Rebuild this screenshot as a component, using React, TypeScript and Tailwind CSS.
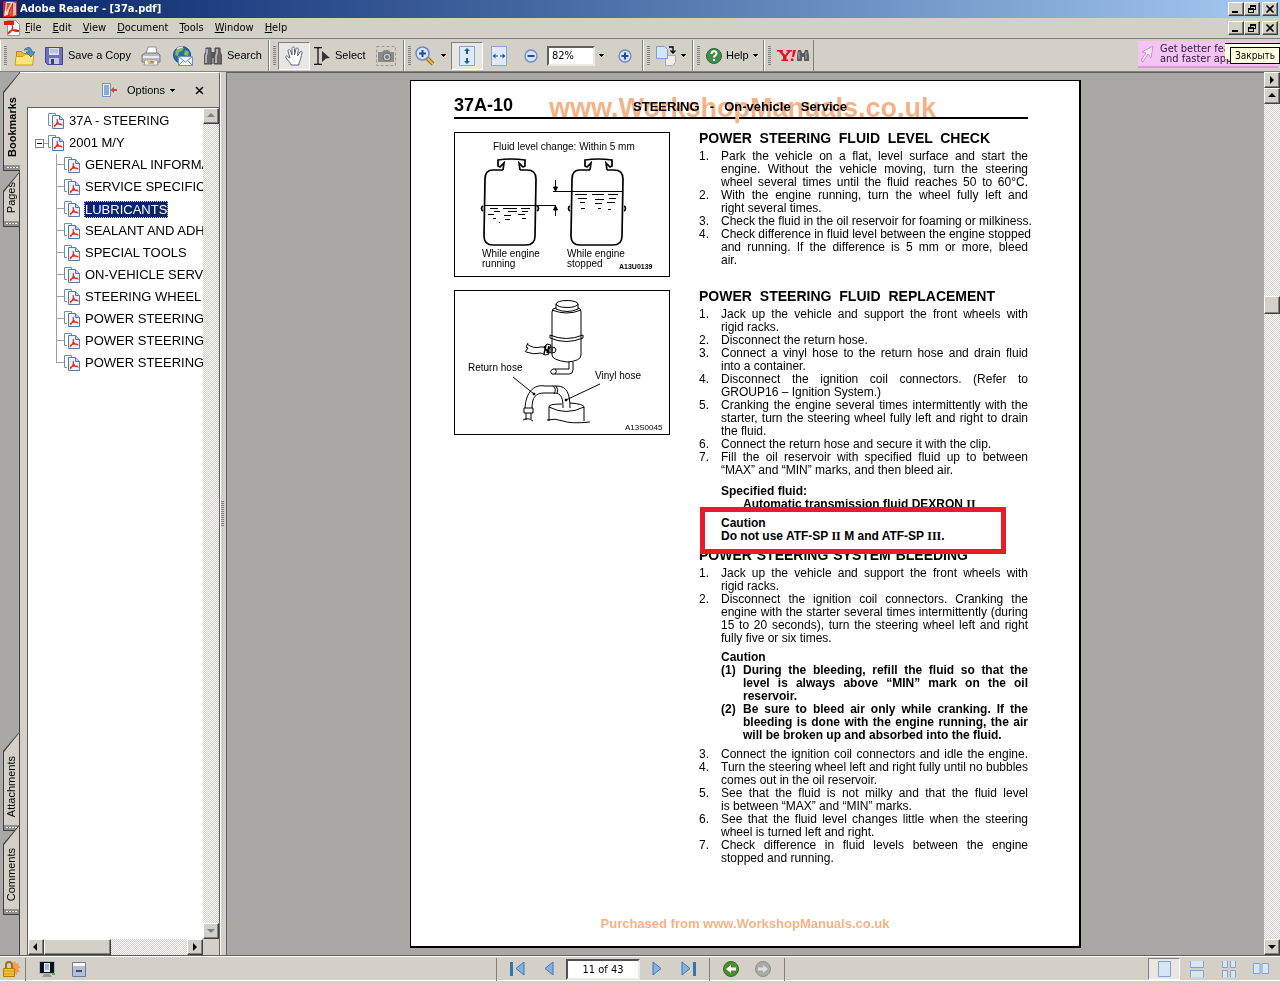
import type { ReactNode } from 'react'

type Step = { n: string; lines: string[]; full?: boolean }

const TRACK =
  'bg-[repeating-conic-gradient(#ffffff_0_25%,#d4d0c8_0_50%)] bg-[length:2px_2px]'
const RAISED =
  'border border-t-white border-l-white border-r-[#404040] border-b-[#404040] bg-[#d4d0c8] shadow-[inset_-1px_-1px_0_#808080]'

const bookmarks = [
  'GENERAL INFORMATION',
  'SERVICE SPECIFICATIONS',
  'LUBRICANTS',
  'SEALANT AND ADHESIVE',
  'SPECIAL TOOLS',
  'ON-VEHICLE SERVICE',
  'STEERING WHEEL AND SHAFT',
  'POWER STEERING GEAR BOX',
  'POWER STEERING OIL PUMP',
  'POWER STEERING HOSES',
]

const levelCheck: Step[] = [
  {
    n: '1.',
    full: true,
    lines: [
      'Park the vehicle on a flat, level surface and start the',
      'engine. Without the vehicle moving, turn the steering',
      'wheel several times until the fluid reaches 50 to 60°C.',
    ],
  },
  { n: '2.', lines: ['With the engine running, turn the wheel fully left and', 'right several times.'] },
  { n: '3.', full: true, lines: ['Check the fluid in the oil reservoir for foaming or milkiness.'] },
  {
    n: '4.',
    lines: [
      'Check difference in fluid level between the engine stopped',
      'and running. If the difference is 5 mm or more, bleed',
      'air.',
    ],
  },
]

const replacement: Step[] = [
  { n: '1.', lines: ['Jack up the vehicle and support the front wheels with', 'rigid racks.'] },
  { n: '2.', lines: ['Disconnect the return hose.'] },
  { n: '3.', lines: ['Connect a vinyl hose to the return hose and drain fluid', 'into a container.'] },
  { n: '4.', lines: ['Disconnect the ignition coil connectors. (Refer to', 'GROUP16 – Ignition System.)'] },
  {
    n: '5.',
    lines: [
      'Cranking the engine several times intermittently with the',
      'starter, turn the steering wheel fully left and right to drain',
      'the fluid.',
    ],
  },
  { n: '6.', lines: ['Connect the return hose and secure it with the clip.'] },
  {
    n: '7.',
    lines: ['Fill the oil reservoir with specified fluid up to between', '“MAX” and “MIN” marks, and then bleed air.'],
  },
]

const bleeding: Step[] = [
  { n: '1.', lines: ['Jack up the vehicle and support the front wheels with', 'rigid racks.'] },
  {
    n: '2.',
    lines: [
      'Disconnect the ignition coil connectors. Cranking the',
      'engine with the starter several times intermittently (during',
      '15 to 20 seconds), turn the steering wheel left and right',
      'fully five or six times.',
    ],
  },
]

const bleedingCautions: Step[] = [
  {
    n: '(1)',
    lines: ['During the bleeding, refill the fluid so that the', 'level is always above “MIN” mark on the oil', 'reservoir.'],
  },
  {
    n: '(2)',
    lines: [
      'Be sure to bleed air only while cranking. If the',
      'bleeding is done with the engine running, the air',
      'will be broken up and absorbed into the fluid.',
    ],
  },
]

const bleedingEnd: Step[] = [
  { n: '3.', full: true, lines: ['Connect the ignition coil connectors and idle the engine.'] },
  { n: '4.', lines: ['Turn the steering wheel left and right fully until no bubbles', 'comes out in the oil reservoir.'] },
  { n: '5.', lines: ['See that the fluid is not milky and that the fluid level', 'is between “MAX” and “MIN” marks.'] },
  { n: '6.', lines: ['See that the fluid level changes little when the steering', 'wheel is turned left and right.'] },
  { n: '7.', lines: ['Check difference in fluid levels between the engine', 'stopped and running.'] },
]

function Steps({ items }: { items: Step[] }) {
  return (
    <ol>
      {items.map((step) => (
        <li key={step.n} className="grid grid-cols-[22px_minmax(0,1fr)]">
          <span>{step.n}</span>
          <p>
            {step.lines.map((line, i) => (
              <span
                key={line}
                className={
                  i < step.lines.length - 1 || step.full
                    ? 'block whitespace-nowrap [text-align-last:justify]'
                    : 'block whitespace-nowrap'
                }
              >
                {line}{' '}
              </span>
            ))}
          </p>
        </li>
      ))}
    </ol>
  )
}

function Caret() {
  return (
    <svg width="5" height="3" viewBox="0 0 5 3" shapeRendering="crispEdges" aria-hidden="true">
      <path d="M0 0h5v1H0zM1 1h3v1H1zM2 2h1v1H2z" />
    </svg>
  )
}

function WindowButtons() {
  const base = `flex h-[14px] w-4 items-center justify-center ${RAISED}`
  return (
    <div className="flex pr-[2px]">
      <button aria-label="Minimize" className={base}>
        <svg width="12" height="10" shapeRendering="crispEdges">
          <path d="M2 7h6v2H2z" />
        </svg>
      </button>
      <button aria-label="Restore" className={base}>
        <svg width="12" height="10" shapeRendering="crispEdges">
          <path d="M4 1h6v2H4zM9 3h1v3H9zM4 3h1v1H4zM2 4h6v2H2zM2 6h1v3H2zM7 6h1v3H7zM2 8h6v1H2zM8 5h2v1H8z" />
        </svg>
      </button>
      <button aria-label="Close" className={`${base} ml-[2px]`}>
        <svg width="12" height="10">
          <path d="M2.500 1.500l7 7M9.500 1.500l-7 7" stroke="#000" strokeWidth="1.600" />
        </svg>
      </button>
    </div>
  )
}

function ArrowButton({ dir, muted }: { dir: 'up' | 'down' | 'left' | 'right'; muted?: boolean }) {
  const shapes = { up: 'M1 6l4-4 4 4z', down: 'M1 3h8l-4 4z', left: 'M6 1v8L2 5z', right: 'M3 1l4 4-4 4z' }
  return (
    <button aria-label={`Scroll ${dir}`} className={`flex size-4 shrink-0 items-center justify-center ${RAISED}`}>
      <svg width="10" height="10" fill={muted ? '#808080' : '#000'}>
        <path d={shapes[dir]} />
      </svg>
    </button>
  )
}

function ToolGroup({ className, children }: { className: string; children: ReactNode }) {
  return (
    <div className={`flex shrink-0 items-center border-r border-l border-r-[#808080] border-l-white pl-[3px] ${className}`}>
      <span className="mr-[2px] h-5 w-[3px] shrink-0 bg-[repeating-linear-gradient(#808080_0_1px,#d4d0c8_1px_2px)]" />
      {children}
    </div>
  )
}

function PdfPageIcon() {
  return (
    <svg width="16" height="16" viewBox="0 0 16 16" fill="none" className="shrink-0" aria-hidden="true">
      <path d="M3 12.500H.5V.5h7v2" fill="#fff" stroke="#6d8cba" />
      <path d="M4.500 2.500h7l4 4v9h-11z" fill="#edf3fb" stroke="#5577ad" />
      <path d="M11.500 2.500v4h4" fill="#b8cdea" stroke="#5577ad" />
      <path d="M9 6c1 2 0 5-3 8M9.500 9c1 2 2.500 3 5 3M6 13c2-2 5-2.500 8-1.500" stroke="#e03418" strokeWidth="1.200" />
    </svg>
  )
}

function AdobeIcon() {
  return (
    <svg width="14" height="16" viewBox="0 0 14 16" aria-hidden="true">
      <path d="M0 1l3-1h11v15l-4 1H0z" fill="#d8201c" />
      <path d="M3 1h7L6 9l-1 5-4 1z" fill="#fff" opacity=".85" />
      <path d="M4 2l4 0-5 9zM9 4l1 11H7l-1-4z" fill="#ee4b39" />
      <path d="M10 1l3 1v12l-3 1z" fill="#f4b6a8" />
    </svg>
  )
}

function MenuPdfIcon() {
  return (
    <svg width="16" height="16" viewBox="0 0 16 16" fill="none" aria-hidden="true">
      <path d="M3.500.5h8l4 4v11h-12z" fill="#fafafa" stroke="#999" />
      <path d="M0 1h10v4H0z" fill="#dd1c1c" />
      <path d="M8 5c2 3 0 6-4 9M8 8c1 3 3 4 7 3M4 13c2-3 7-4 11-2" stroke="#d82a20" strokeWidth="1.300" />
    </svg>
  )
}

function OpenIcon() {
  return (
    <svg width="22" height="20" viewBox="0 0 22 20" aria-hidden="true">
      <path d="M2.500 5.500h5l2 2h8v11h-15z" fill="#e9bb3f" stroke="#b88916" />
      <path d="M1 19l1-8.500h7l2-2h9L18.500 19z" fill="#ffe579" stroke="#c99c24" />
      <path d="M10 4c3-4 8-3 8 2h3l-4 5-5-5h3c0-2-2-3-5-2z" fill="#5c93c7" stroke="#2c629b" strokeWidth=".8" />
    </svg>
  )
}

function SaveIcon() {
  return (
    <svg width="18" height="18" viewBox="0 0 18 18" aria-hidden="true">
      <path d="M.5.5h17v17h-15l-2-2z" fill="#6f70b8" stroke="#44458b" />
      <path d="M4 1h10v7H4z" fill="#dcdff0" />
      <path d="M5 3h8M5 5h8" stroke="#999fc4" />
      <path d="M4 11h10v6H4z" fill="#c5c8dc" />
      <path d="M6 12h3v5H6z" fill="#3d3e77" />
    </svg>
  )
}

function PrintIcon() {
  return (
    <svg width="20" height="20" viewBox="0 0 20 20" aria-hidden="true">
      <path d="M5 8l2-7h8l1 7z" fill="#fff" stroke="#8f9299" />
      <path d="M1 9l3-2h13l2 2v7H1z" fill="#b9bbc0" stroke="#777a82" />
      <path d="M2 10h16v2H2z" fill="#e9eaec" />
      <path d="M4 14h12l1 5H3z" fill="#fff" stroke="#999" />
      <path d="M6 15h8l-1 3H7z" fill="#f0c23f" />
      <path d="M9 15l4 0-2 3z" fill="#6d8fce" />
    </svg>
  )
}

function MailIcon() {
  return (
    <svg width="20" height="20" viewBox="0 0 20 20" aria-hidden="true">
      <circle cx="9" cy="9" r="8.500" fill="#2c68ad" stroke="#1c4c86" />
      <path d="M3 4c3-3 6-3 8-2l-2 3-3 1-1 4-3-1zM12 4l4 2-1 4-4-1z" fill="#82bb5d" />
      <path d="M4 3c2-2 5-2 6-2" stroke="#d9ecff" strokeWidth="1.500" fill="none" />
      <path d="M5.500 10.500h14v9h-14z" fill="#f3f7fc" stroke="#6c93c2" />
      <path d="M6 11l6.500 5L19 11M6 19l4-4M19 19l-4-4" fill="none" stroke="#6c93c2" />
    </svg>
  )
}

function BinocularsIcon() {
  return (
    <svg width="18" height="18" viewBox="0 0 18 18" aria-hidden="true">
      <path d="M2 1h5v4l1 3v9H0V9l2-4zM11 1h5v4l2 4v8h-8V8l1-3z" fill="#686868" stroke="#484848" />
      <path d="M7 5h4v6H7z" fill="#555" />
      <path d="M3 2v4L2 9v7M13 2v4l-1 3v7" stroke="#c4c4c4" strokeWidth="1.500" fill="none" />
    </svg>
  )
}

function HandIcon() {
  return (
    <svg width="20" height="20" viewBox="0 0 20 20" aria-hidden="true">
      <path
        d="M7 19c0-2-3-4-5-7-1-2 1-3 2-1l2 1L4 5c0-2 2-2 2.500 0L8 9V2.500c0-2 2.500-2 2.500 0V9L12 3c.5-2 2.500-1 2.300.5L13.500 10l2.500-4c1-1.500 2.500-.5 2 1-1 3-1.500 8-3 9.500L15 19z"
        fill="#fff"
        stroke="#5a6275"
      />
    </svg>
  )
}

function SelectIcon() {
  return (
    <svg width="18" height="18" viewBox="0 0 18 18" aria-hidden="true">
      <path d="M1 .5h3l1 1 1-1h3M5 1v16M1 17.500h3l1-1 1 1h3" stroke="#111" strokeWidth="1.300" fill="none" />
      <path d="M9 4l8 7-4 .5L9 15z" fill="#333" />
    </svg>
  )
}

function CameraIcon() {
  return (
    <svg width="20" height="20" viewBox="0 0 20 20" aria-hidden="true">
      <path d="M.5.5h19v19H.5z" fill="none" stroke="#999" strokeDasharray="3 2" />
      <path d="M2 6h4l2-2h5l1 2h4v10H2z" fill="#8b8b88" />
      <circle cx="11" cy="11" r="4" fill="#c9c9c5" stroke="#666" />
      <circle cx="11" cy="11" r="2" fill="#777" />
    </svg>
  )
}

function MagnifierIcon() {
  return (
    <svg width="20" height="20" viewBox="0 0 20 20" aria-hidden="true">
      <path d="M12 12l6 6" stroke="#8d6a1c" strokeWidth="4" />
      <path d="M12 12l6 6" stroke="#f0c14a" strokeWidth="2" />
      <circle cx="7.500" cy="7.500" r="6.500" fill="#d7e6fa" stroke="#7088c0" strokeWidth="1.500" />
      <path d="M4 7.500h7M7.500 4v7" stroke="#1f4f96" strokeWidth="2" />
    </svg>
  )
}

function ZoomIcon({ plus }: { plus?: boolean }) {
  return (
    <svg width="14" height="14" viewBox="0 0 14 14" aria-hidden="true">
      <circle cx="7" cy="7" r="6" fill="#d3e2f8" stroke="#7088c0" strokeWidth="1.300" />
      <path d={plus ? 'M3.500 7h7M7 3.500v7' : 'M3.500 7h7'} stroke="#1f4f96" strokeWidth="2" />
    </svg>
  )
}

function FitIcon({ wide }: { wide?: boolean }) {
  return (
    <svg width="16" height="20" viewBox="0 0 16 20" aria-hidden="true">
      <path d="M.5.5h15v19H.5z" fill="#dfeafa" stroke="#86a7d6" />
      {wide ? (
        <path d="M1.500 10l3-2.500v2H7v1H4.500v2zM14.500 10l-3-2.500v2H9v1h2.500v2z" fill="#235a9f" />
      ) : (
        <path d="M8 2l3 3H9v3H7V5H5zM8 18l3-3H9v-3H7v3H5z" fill="#235a9f" />
      )}
    </svg>
  )
}

function RotateIcon() {
  return (
    <svg width="20" height="20" viewBox="0 0 20 20" aria-hidden="true">
      <path d="M9.500 9.500h10v7l-3 3h-7z" fill="#eee" stroke="#aaa" />
      <path d="M.5.5h8l3 3v9H.5z" fill="#d4e4f9" stroke="#7e9fd0" />
      <path d="M13 1h4v5M14.500 4.500L17 7l2.500-2.500" stroke="#000" strokeWidth="1.300" fill="none" />
    </svg>
  )
}

function HelpIcon() {
  return (
    <svg width="16" height="16" viewBox="0 0 16 16" aria-hidden="true">
      <circle cx="8" cy="8" r="7.500" fill="#3c8e49" stroke="#2a6837" />
      <path d="M5.500 6c0-3.500 5-3.500 5-.5 0 2-2.500 2-2.500 4M8 11v2" stroke="#fff" strokeWidth="2" fill="none" />
    </svg>
  )
}

function YahooIcon() {
  return (
    <svg width="32" height="13" viewBox="0 0 32 13" aria-hidden="true">
      <path d="M0 1h6v1.500H5L8 6l3-3.500H9.500V1H15v1.500h-1.500L9.500 7.500v3H11V12H4.500v-1.500H6v-3L2 2.500H0z" fill="#e0151f" />
      <path d="M16 1h3l-2 7h-2zM14 9.500h2.500V12H14z" fill="#e0151f" />
      <path d="M21 1h3l1 3h2l1-3h3l1 6v5h-5V8h-2v4h-5V7z" fill="#5b5b5b" />
      <path d="M22 3v7M29 3v7" stroke="#aaa" />
    </svg>
  )
}

function Toolbar() {
  const tool = 'flex shrink-0 items-center'
  return (
    <div className="flex h-[34px] shrink-0 border-t border-b border-t-[#808080] border-b-[#808080] pt-px text-[11px]">
      <ToolGroup className="w-[269px]">
        <button aria-label="Open" className={`${tool} ml-[5px]`}>
          <OpenIcon />
        </button>
        <button className={`${tool} ml-[9px] gap-[5px]`}>
          <SaveIcon />
          Save a Copy
        </button>
        <button aria-label="Print" className={`${tool} ml-[10px]`}>
          <PrintIcon />
        </button>
        <button aria-label="Email" className={`${tool} ml-[12px]`}>
          <MailIcon />
        </button>
        <button className={`${tool} ml-[11px] gap-[5px]`}>
          <BinocularsIcon />
          Search
        </button>
      </ToolGroup>
      <ToolGroup className="w-[135px]">
        <button
          aria-label="Hand tool"
          className="flex h-7 w-8 items-center justify-center border border-t-[#808080] border-r-white border-b-white border-l-[#808080] bg-[#e9e7e3]"
        >
          <HandIcon />
        </button>
        <button className={`${tool} ml-[3px] gap-[4px]`}>
          <SelectIcon />
          Select
        </button>
        <button aria-label="Snapshot" className={`${tool} ml-[10px]`}>
          <CameraIcon />
        </button>
      </ToolGroup>
      <ToolGroup className="w-[239px]">
        <button aria-label="Zoom in tool" className={`${tool} ml-[2px] gap-[6px]`}>
          <MagnifierIcon />
          <Caret />
        </button>
        <button
          aria-label="Fit page"
          className="ml-[5px] flex h-7 w-8 items-center justify-center border border-t-[#808080] border-r-white border-b-white border-l-[#808080] bg-[#e9e7e3]"
        >
          <FitIcon />
        </button>
        <button aria-label="Fit width" className={`${tool} ml-[8px]`}>
          <FitIcon wide />
        </button>
        <button aria-label="Zoom out" className={`${tool} ml-[17px]`}>
          <ZoomIcon />
        </button>
        <input
          aria-label="Zoom"
          defaultValue="82%"
          className="ml-[9px] h-5 w-12 shrink-0 border-2 border-t-[#606060] border-r-[#ece9e4] border-b-[#ece9e4] border-l-[#606060] bg-white pl-[3px] font-['DejaVu_Sans_Condensed','DejaVu_Sans',sans-serif] text-[11px]"
        />
        <button aria-label="Zoom levels" className={`${tool} ml-[4px]`}>
          <Caret />
        </button>
        <button aria-label="Zoom in" className={`${tool} ml-[14px]`}>
          <ZoomIcon plus />
        </button>
      </ToolGroup>
      <ToolGroup className="w-[50px]">
        <button aria-label="Rotate" className={`${tool} ml-[4px] gap-[5px]`}>
          <RotateIcon />
          <Caret />
        </button>
      </ToolGroup>
      <ToolGroup className="w-[71px]">
        <button className={`${tool} ml-[4px] gap-[4px]`}>
          <HelpIcon />
          Help
          <Caret />
        </button>
      </ToolGroup>
      <ToolGroup className="w-[50px]">
        <button aria-label="Yahoo search" className={`${tool} ml-[4px]`}>
          <YahooIcon />
        </button>
      </ToolGroup>
      <div className="relative ml-auto h-[27px] w-[142px] pt-px">
        <a
          href="#toolbar"
          className="flex h-[27px] w-[140px] items-center gap-[6px] overflow-hidden border-b-2 border-[#d59bd8] bg-[#f5c4f6] pl-[2px] font-['DejaVu_Sans_Condensed','DejaVu_Sans',sans-serif] text-[11px] leading-[10px] whitespace-nowrap text-[#33203a]"
        >
          <svg width="14" height="18" viewBox="0 0 14 18" className="shrink-0" aria-hidden="true">
            <path d="M13 1L11 13 8 9 3 17 1 15l5-7-4-1z" fill="#fbe4fb" stroke="#c795c9" />
          </svg>
          <span>
            Get better features
            <br />
            and faster applications
          </span>
        </a>
        <div className="absolute top-[3px] right-0 h-4 w-[55px] border-t border-black bg-[#ffffe1]" />
        <div
          role="tooltip"
          className="absolute top-[7px] right-0 flex h-[17px] w-[50px] items-center justify-center border border-black bg-[#ffffe1] font-['DejaVu_Sans_Condensed','DejaVu_Sans',sans-serif] text-[10px]"
        >
          Закрыть
        </div>
      </div>
    </div>
  )
}

function SideTab({ label, className, active }: { label: string; className: string; active?: boolean }) {
  const clip = '[clip-path:polygon(100%_0,100%_100%,0_100%,0_20px)]'
  return (
    <div className={`flex w-[17px] shrink-0 bg-[#404040] pt-px pb-px pl-px ${clip} ${className}`}>
      <button
        className={`flex flex-1 flex-col items-center justify-end bg-[#d4d0c8] text-[11px] ${clip} ${active ? 'font-bold' : 'border-r border-[#404040]'}`}
      >
        <span className="rotate-180 pt-2 leading-[13px] [writing-mode:vertical-rl]">{label}</span>
        <span className="flex h-[5px] w-full items-center justify-center bg-[#909090]">
          <span className="h-px w-[11px] bg-[repeating-linear-gradient(90deg,#ffffff_0_2px,#606060_2px_3px)]" />
        </span>
      </button>
    </div>
  )
}

function BookmarkTree() {
  return (
    <ul className="min-h-0 flex-1 overflow-hidden pt-[2px] text-[13px] leading-[22px] whitespace-nowrap">
      <li className="flex items-center gap-[5px] pl-5">
        <PdfPageIcon />
        37A - STEERING
      </li>
      <li>
        <div className="flex items-center pl-[7px]">
          <button aria-label="Collapse 2001 M/Y" className="flex size-[9px] items-center justify-center border border-[#808080]">
            <span className="h-px w-[5px] bg-black" />
          </button>
          <span className="h-px w-[4px] bg-[#a0a0a0]" />
          <PdfPageIcon />
          <span className="pl-[5px]">2001 M/Y</span>
        </div>
        <ul className="pl-7">
          {bookmarks.map((title, i) => (
            <li key={title} className="flex h-[22px] items-center">
              <span className="flex h-[22px] w-2 shrink-0 flex-col">
                <span className="h-[11px] border-b border-l border-[#a0a0a0]" />
                {i < bookmarks.length - 1 && <span className="h-[11px] border-l border-[#a0a0a0]" />}
              </span>
              <PdfPageIcon />
              <a
                href="#page"
                className={
                  title === 'LUBRICANTS'
                    ? 'ml-[4px] border border-dotted border-[#e0d8a0] bg-[#0a246a] leading-[15px] text-white'
                    : 'ml-[5px]'
                }
              >
                {title}
              </a>
            </li>
          ))}
        </ul>
      </li>
    </ul>
  )
}

function BookmarksPanel() {
  return (
    <aside className="flex w-[200px] shrink-0 flex-col border-t border-r border-t-white border-r-[#606060] pl-[7px]">
      <div className="flex h-[34px] shrink-0 items-center pl-[75px] text-[11px]">
        <svg width="15" height="14" viewBox="0 0 15 14" aria-hidden="true">
          <path d="M.5.500h8v13h-8z" fill="#e7f0fb" stroke="#6f93c8" />
          <path d="M2 3h5M2 5h5M2 7h5M2 9h5M2 11h5" stroke="#3966ab" />
          <path d="M15 6h-3V4L8.500 7l3.500 3V8h3z" fill="#c8473e" />
        </svg>
        <button className="ml-[10px] flex items-center gap-[5px]">
          Options
          <Caret />
        </button>
        <button aria-label="Close panel" className="ml-[20px]">
          <svg width="9" height="9" className="block">
            <path d="M1 1l7 7M8 1L1 8" stroke="#000" strokeWidth="1.500" />
          </svg>
        </button>
      </div>
      <div className="flex min-h-0 flex-1 flex-col border-t border-l border-[#606060] bg-white">
        <div className="flex min-h-0 flex-1">
          <BookmarkTree />
          <div className={`flex w-4 flex-col justify-between ${TRACK}`}>
            <ArrowButton dir="up" muted />
            <ArrowButton dir="down" muted />
          </div>
        </div>
        <div className="flex bg-[#d4d0c8] pr-4">
          <div className={`flex flex-1 ${TRACK}`}>
            <ArrowButton dir="left" />
            <span className={`h-4 w-[67px] ${RAISED}`} />
            <span className="ml-auto flex">
              <ArrowButton dir="right" />
            </span>
          </div>
        </div>
      </div>
    </aside>
  )
}

function LevelFigure() {
  return (
    <svg
      width="216"
      height="145"
      viewBox="1 1 214 143"
      className="border border-black font-['Liberation_Sans',Arial,sans-serif] text-[10px]"
      fill="none"
      stroke="#000"
      role="img"
      aria-label="Fluid level with engine running and stopped"
    >
      {[0, 87].map((x) => (
        <g key={x} transform={`translate(${x} 0)`} strokeWidth="1.700">
          <path d="M49 38h-10q-8 0-8 9l-1 57q0 9 9 9h33q9 0 9-9l1-57q0-9-9-9H66" />
          <path d="M49 38l1-7-4 4-2-1v-6q13-2 27 0v6l-2 1-4-4 1 7" />
          <path d="M29 74c-2 1-2 4 0 5M83 74c2 1 2 4 0 5" />
        </g>
      ))}
      <path d="M30 73.500h72M99 59.500h70" />
      <path d="M101.500 48v11M101.500 74v10" />
      <path d="M99.500 55h4l-2 4zM99.500 78h4l-2-4z" fill="#000" />
      <path d="M36 76.500h8m5 0h14m4 0h9M40 79.500h6m8 0h9m5 0h6M34 82.500h6m10 1h7m7-1h7M39 86.500h3m9 1h5m12-1h4M45 90.500h1" />
      <path d="M121 62.500h12m5 0h12m4 0h10M124 66.500h9m8 1h9m5-1h7M126 70.500h5m10 1h7m5-1h8M127 76.500h4m13 0h3m7 1h3" />
      <g fill="#000" stroke="none">
        <text x="39" y="18">Fluid level change: Within 5 mm</text>
        <text x="28" y="125">While engine</text>
        <text x="28" y="135">running</text>
        <text x="113" y="125">While engine</text>
        <text x="113" y="135">stopped</text>
        <text x="165" y="137" className="text-[7px] font-bold">A13U0139</text>
      </g>
    </svg>
  )
}

function HoseFigure() {
  return (
    <svg
      width="216"
      height="145"
      viewBox="1 1 214 143"
      className="border border-black font-['Liberation_Sans',Arial,sans-serif] text-[10px]"
      fill="none"
      stroke="#000"
      role="img"
      aria-label="Return hose and vinyl hose"
    >
      <ellipse cx="113" cy="14" rx="11" ry="3.500" />
      <path d="M102 14v5q11 5 22 0v-5M102 18q-4 0-4 4v43q0 5 15 7 14-1 14-7V22q0-4-3-4M98 20q15 6 29 0" />
      <path d="M96 45q16 7 33 0v3q-17 7-33 0zM115 72v7h-16q-4 2-1 5h17q4 0 4-4v-8M101 79q3 2 0 5" />
      <path d="M73 54q6 5 14 3l3 0 3-3 4 1-2 4h4M72 62q8 3 15 1l4 2 4-1-1-3h5M74 53l-2 4 2 1-3 4" />
      <ellipse cx="98" cy="60" rx="4" ry="3" />
      <path d="M90 57l4 5M92 55l-2 9M95 56l-2 7" strokeWidth="1.500" />
      <path d="M71 118c1-15 8-24 20-22h12c10 0 13 8 13 22M78 118c0-11 4-15 12-15h10c8 0 9 6 9 15M99 96q4 3 1 8M102 96q3 3 1 8" />
      <path d="M70 118h9v5h-9zM72 123v7M77 123v6M69 130q5-3 10 1M95 117v14M130 117v14M93 130q8-2 16 1t27 1" />
      <path d="M108 114q-14 0-13 3 17 9 35 0 0-3-14-4" />
      <path d="M59 87l21 17M146 94l-34 16" />
      <circle cx="80" cy="104" r="1" fill="#000" />
      <circle cx="112" cy="110" r="1" fill="#000" />
      <g fill="#000" stroke="none">
        <text x="14" y="81">Return hose</text>
        <text x="141" y="89">Vinyl hose</text>
        <text x="171" y="140" className="text-[8px]">A13S0045</text>
      </g>
    </svg>
  )
}

function ManualPage() {
  const heading = 'mb-[3px] text-[14px] leading-[18px] font-bold whitespace-nowrap [text-align-last:justify]'
  return (
    <article className="flex h-[868px] w-[671px] shrink-0 flex-col border border-r-2 border-b-2 border-black bg-white pr-[51px] pl-[43px]">
      <header className="relative flex h-[38px] items-center border-b-2 border-black pt-[12px] font-bold">
        <span className="absolute top-[10px] left-[95px] text-[27px] leading-[34px] text-[#f6b184]">
          www.WorkshopManuals.co.uk
        </span>
        <span className="text-[18px] leading-6">37A-10</span>
        <h1 className="relative ml-[120px] w-[214px] pt-[3px] text-[13px] leading-4 whitespace-nowrap mix-blend-multiply [text-align-last:justify]">
          STEERING - On-vehicle Service
        </h1>
      </header>
      <div className="grid grid-cols-[216px_minmax(0,1fr)] gap-[29px]">
        <div className="flex flex-col gap-[13px] pt-[13px]">
          <LevelFigure />
          <HoseFigure />
        </div>
        <div className="pt-[10px] text-[12px] leading-[13px]">
          <section>
            <h2 className={`${heading} w-[291px]`}>POWER STEERING FLUID LEVEL CHECK</h2>
            <Steps items={levelCheck} />
          </section>
          <section className="pt-[20px]">
            <h2 className={`${heading} w-[296px]`}>POWER STEERING FLUID REPLACEMENT</h2>
            <Steps items={replacement} />
            <div className="pt-2 pl-[22px] font-bold">
              <p>Specified fluid:</p>
              <p className="pl-[22px]">
                Automatic transmission fluid DEXRON <span className="font-['Liberation_Serif',serif]">II</span>
              </p>
            </div>
            <div className="relative mt-[6px] ml-[22px] font-bold">
              <div className="absolute -top-[10px] -left-[21px] h-[47px] w-[306px] border-[5px] border-[#e81c24] bg-white" />
              <p className="relative">Caution</p>
              <p className="relative">
                Do not use ATF-SP <span className="font-['Liberation_Serif',serif]">II</span> M and ATF-SP{' '}
                <span className="font-['Liberation_Serif',serif]">III</span>.
              </p>
            </div>
          </section>
          <section className="pt-[3px]">
            <h2 className={`${heading} w-[269px]`}>POWER STEERING SYSTEM BLEEDING</h2>
            <Steps items={bleeding} />
            <div className="py-[6px] pl-[22px] font-bold">
              <p>Caution</p>
              <Steps items={bleedingCautions} />
            </div>
            <Steps items={bleedingEnd} />
          </section>
        </div>
      </div>
      <footer className="mt-auto pb-[14px] pl-2 text-center text-[13px] leading-4 font-bold text-[#f6b184]">
        Purchased from www.WorkshopManuals.co.uk
      </footer>
    </article>
  )
}

function NavArrow({ flip, end }: { flip?: boolean; end?: boolean }) {
  return (
    <svg width="16" height="16" viewBox="0 0 16 16" className={flip ? '-scale-x-100' : ''} aria-hidden="true">
      <path d={end ? 'M15 1v13L7 7.500z' : 'M12 1v13L4 7.500z'} fill="#86b1df" stroke="#3d78b5" />
      {end && <path d="M1 1h3v14H1z" fill="#3873b2" />}
    </svg>
  )
}

function HistoryIcon({ forward }: { forward?: boolean }) {
  return (
    <svg width="16" height="16" viewBox="0 0 16 16" className={forward ? '-scale-x-100' : ''} aria-hidden="true">
      <circle cx="8" cy="8" r="7.500" fill={forward ? '#a9a9a6' : '#4b8f2f'} stroke={forward ? '#8f8f8c' : '#356d20'} />
      <path d="M3 8l5-4v2.500h5v3H8V12z" fill={forward ? '#dddddb' : '#fff'} />
    </svg>
  )
}

function LayoutIcon({ d }: { d: string }) {
  return (
    <svg width="16" height="16" viewBox="0 0 16 16" aria-hidden="true">
      <path d={d} fill="#d6e5f8" stroke="#83a3d0" />
    </svg>
  )
}

function StatusBar() {
  return (
    <footer className="flex h-[28px] shrink-0 items-center border-t border-white pb-[3px] shadow-[inset_0_-3px_0_#d4d0c8,inset_0_-4px_0_#ffffff]">
      <div className="flex h-full flex-1 items-center">
        <button aria-label="Security" className="pl-[2px]">
          <svg width="19" height="18" viewBox="0 0 19 18" aria-hidden="true">
            <path d="M13 1l1 3 3-1-1 3 3 1-3 2 2 3-3 0v3l-3-2-3-8z" fill="#f49a4b" />
            <path d="M4 9V5c0-4 6-4 6 0v4" fill="none" stroke="#98711a" strokeWidth="2" />
            <path d="M1.500 8.500h11v8h-11z" fill="#f2c230" stroke="#a97d12" />
            <path d="M2 11h10M2 14h10" stroke="#d19c1b" />
          </svg>
        </button>
        <span className="ml-[4px] h-[23px] w-px bg-[#808080]" />
        <button aria-label="Full screen" className="ml-[13px]">
          <svg width="16" height="16" viewBox="0 0 16 16" aria-hidden="true">
            <path d="M0 0h16v13H0z" fill="#aeb3ba" />
            <path d="M1 1h14v11H1z" fill="#0b1020" />
            <path d="M5 2h6v9H5z" fill="#e8eef8" />
            <path d="M6 4h4M6 6h4M6 8h4" stroke="#6c7fa3" />
            <path d="M5 13h6l2 3H3z" fill="#999" />
            <path d="M13 12h3v2h-3z" fill="#4fb04c" />
          </svg>
        </button>
        <button aria-label="Hide toolbars" className="ml-[17px]">
          <svg width="14" height="15" viewBox="0 0 14 15" aria-hidden="true">
            <path d="M.5.5h13v14H.5z" fill="#b4bfd3" stroke="#6c7a96" />
            <path d="M1 1h12v3H1z" fill="#fff" />
            <path d="M4 8h6v2H4z" fill="#3b4c74" />
          </svg>
        </button>
      </div>
      <nav className="ml-3 flex h-full items-center">
        <div className="flex h-[23px] items-center gap-[16px] border-r border-l border-[#808080] px-[12px]">
          <button aria-label="First page"><NavArrow end /></button>
          <button aria-label="Previous page"><NavArrow /></button>
          <input
            aria-label="Page"
            defaultValue="11 of 43"
            className="-mx-[7px] h-[21px] w-[74px] border-2 border-t-[#505050] border-r-[#ece9e4] border-b-[#ece9e4] border-l-[#505050] bg-white text-center font-['DejaVu_Sans_Condensed','DejaVu_Sans',sans-serif] text-[11px]"
          />
          <button aria-label="Next page"><NavArrow flip /></button>
          <button aria-label="Last page"><NavArrow flip end /></button>
        </div>
        <div className="flex h-[23px] items-center gap-[16px] border-r border-[#808080] px-[13px]">
          <button aria-label="Previous view"><HistoryIcon /></button>
          <button aria-label="Next view"><HistoryIcon forward /></button>
        </div>
      </nav>
      <div className="flex h-full flex-1 items-center justify-end gap-4 pr-[11px]">
        <button
          aria-label="Single page"
          className="-mr-[7px] flex h-[22px] w-8 items-center justify-center border border-t-[#808080] border-r-white border-b-white border-l-[#808080] bg-[#e9e7e3]"
        >
          <LayoutIcon d="M2.500.5h12v15h-12z" />
        </button>
        <button aria-label="Continuous"><LayoutIcon d="M1.500 0v6.500h13V0M1.500 16V9.500h13V16" /></button>
        <button aria-label="Continuous facing"><LayoutIcon d="M1.500 0v6.500h5V0M9.500 0v6.500h5V0M1.500 16V9.500h5V16M9.500 16V9.500h5V16" /></button>
        <button aria-label="Facing"><LayoutIcon d="M.5 2.500h6.500v10H.5zM9 2.500h6.500v10H9z" /></button>
      </div>
    </footer>
  )
}

const menus = ['File', 'Edit', 'View', 'Document', 'Tools', 'Window', 'Help']

export default function App() {
  return (
    <div className="flex h-screen min-h-[984px] flex-col bg-[#d4d0c8] font-['Liberation_Sans',Arial,sans-serif] text-black">
      <div className="flex h-[18px] shrink-0 items-center justify-between bg-linear-to-r from-[#0a246a] to-[#a6caf0] pl-[3px]">
        <div className="flex items-center gap-[3px] font-['DejaVu_Sans_Condensed','DejaVu_Sans',sans-serif] text-[11px] font-bold text-white">
          <AdobeIcon />
          Adobe Reader - [37a.pdf]
        </div>
        <WindowButtons />
      </div>
      <div className="flex h-5 shrink-0 items-center justify-between pl-[4px]">
        <nav className="flex items-center gap-[11px] font-['DejaVu_Sans_Condensed','DejaVu_Sans',sans-serif] text-[11px]">
          <span className="-mr-[6px]">
            <MenuPdfIcon />
          </span>
          {menus.map((menu) => (
            <button key={menu}>
              <span className="underline">{menu[0]}</span>
              {menu.slice(1)}
            </button>
          ))}
        </nav>
        <WindowButtons />
      </div>
      <Toolbar />
      <div className="flex min-h-0 flex-1 border-b border-[#606060]">
        <div className="flex w-5 shrink-0 flex-col border-r border-[#404040] bg-[#a9a8a4] pl-[3px]">
          <SideTab label="Bookmarks" active className="h-[99px]" />
          <SideTab label="Pages" className="h-[56px]" />
          <SideTab label="Attachments" className="mt-auto h-[100px]" />
          <SideTab label="Comments" className="-mt-[7px] mb-[40px] h-[91px]" />
        </div>
        <BookmarksPanel />
        <div className="flex w-[6px] shrink-0 items-center border-l border-white">
          <span className="h-[26px] w-[3px] bg-[repeating-linear-gradient(#808080_0_1px,#d4d0c8_1px_2px)]" />
        </div>
        <main id="page" className="flex flex-1 justify-center overflow-hidden border-t border-l border-[#606060] bg-[#a9a8a4] pt-[7px]">
          <ManualPage />
        </main>
        <div className={`flex w-4 shrink-0 flex-col ${TRACK}`}>
          <ArrowButton dir="right" />
          <ArrowButton dir="up" />
          <div className="flex flex-1 flex-col">
            <span className="h-0 flex-[192]" />
            <span className={`h-[18px] ${RAISED}`} />
            <span className="h-0 flex-[625]" />
          </div>
          <ArrowButton dir="down" />
        </div>
      </div>
      <StatusBar />
    </div>
  )
}
